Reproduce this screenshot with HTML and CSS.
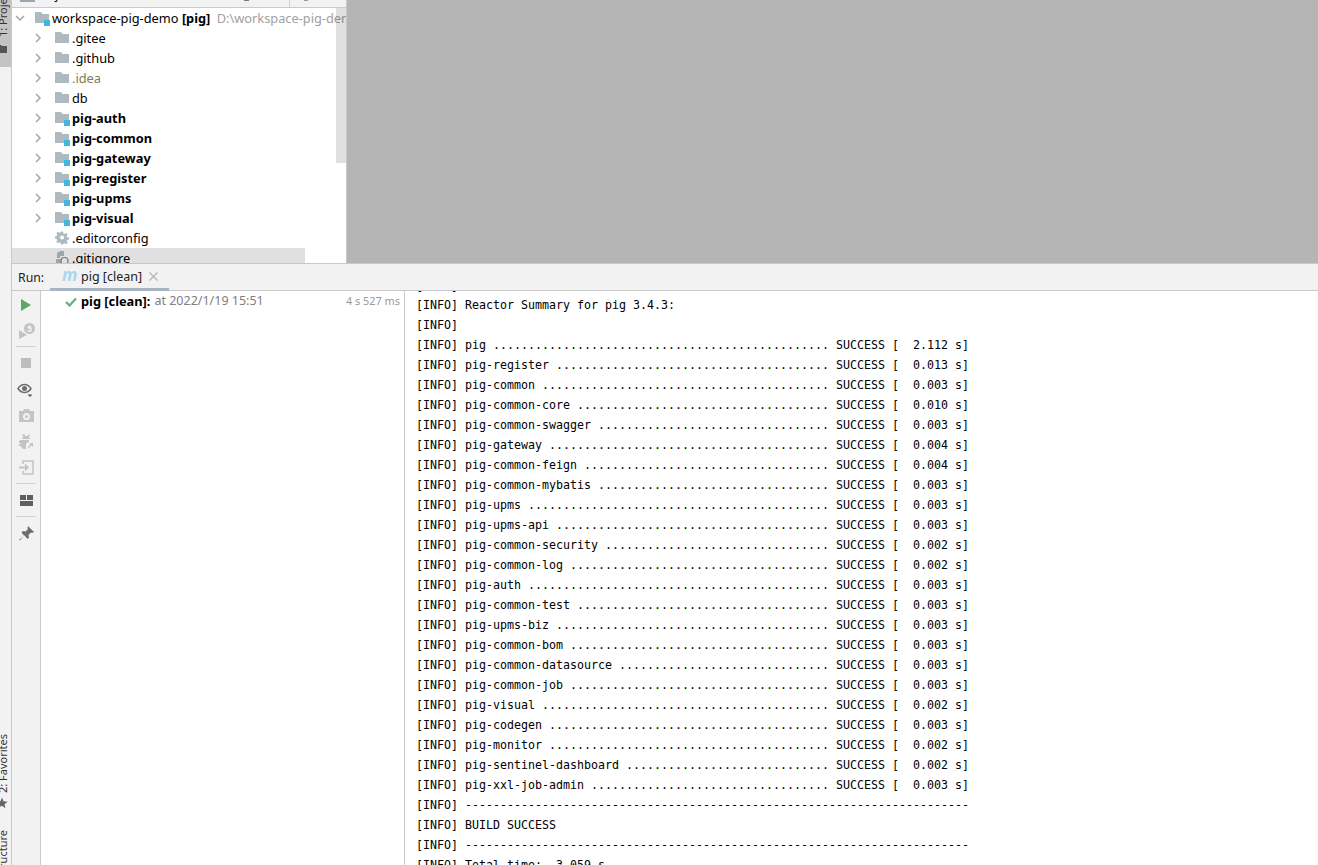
FILE: index.html
```html
<!DOCTYPE html>
<html lang="en">
<head>
<meta charset="utf-8">
<title>pig [clean]</title>
<link rel="stylesheet" href="styles.css">
</head>
<body>
<div class="app">
  <aside class="strip">
    <div class="strip-tab strip-tab-active">
      <span class="vtext">1: Project</span>
      <svg class="strip-icon" width="10" height="10" viewBox="0 0 10 10"><path d="M0 1h4l1 1h5v7H0z" fill="#555"/></svg>
    </div>
    <div class="strip-spacer"></div>
    <div class="strip-tab strip-fav">
      <span class="vtext">2: Favorites</span>
      <svg class="strip-star" width="12" height="12" viewBox="0 0 10 10"><path d="M5 .5l1.300 3.100 3.400.3-2.600 2.200.8 3.300L5 7.200 2.100 8.900l.8-3.300L.3 3.900l3.400-.3z" fill="#666"/></svg>
    </div>
    <div class="strip-tab strip-struct">
      <span class="vtext">Z: Structure</span>
    </div>
  </aside>

  <main class="main">
    <section class="top">
      <div class="project">
        <div class="project-head">
          <i class="head-icon"></i>
          <span class="project-title">Project</span>
          <i class="head-gear"></i>
          <i class="head-sep"></i>
          <i class="head-dot"></i>
        </div>
        <div class="tree">
          <div class="tree-row root">
            <svg class="chev" width="10" height="10" viewBox="0 0 10 10"><path d="M1 3l4 4 4-4" class="chev-line"/></svg>
            <span class="folder module"><svg width="16" height="14" viewBox="0 0 16 14"><path d="M0 1h6l1.500 2H14v9H0z" fill="#aeb9c0"/></svg><i class="badge"></i></span>
            <span class="label">workspace-pig-demo <b>[pig]</b> <span class="path">D:\workspace-pig-demo</span></span>
          </div>
          <div class="tree-row">
            <svg class="chev" width="10" height="10" viewBox="0 0 10 10"><path d="M3 1l4 4-4 4" class="chev-line"/></svg>
            <span class="folder"><svg width="16" height="14" viewBox="0 0 16 14"><path d="M0 1h6l1.500 2H14v9H0z" fill="#aeb9c0"/></svg></span>
            <span class="label">.gitee</span>
          </div>
          <div class="tree-row">
            <svg class="chev" width="10" height="10" viewBox="0 0 10 10"><path d="M3 1l4 4-4 4" class="chev-line"/></svg>
            <span class="folder"><svg width="16" height="14" viewBox="0 0 16 14"><path d="M0 1h6l1.500 2H14v9H0z" fill="#aeb9c0"/></svg></span>
            <span class="label">.github</span>
          </div>
          <div class="tree-row">
            <svg class="chev" width="10" height="10" viewBox="0 0 10 10"><path d="M3 1l4 4-4 4" class="chev-line"/></svg>
            <span class="folder"><svg width="16" height="14" viewBox="0 0 16 14"><path d="M0 1h6l1.500 2H14v9H0z" fill="#aeb9c0"/></svg></span>
            <span class="label ignored">.idea</span>
          </div>
          <div class="tree-row">
            <svg class="chev" width="10" height="10" viewBox="0 0 10 10"><path d="M3 1l4 4-4 4" class="chev-line"/></svg>
            <span class="folder"><svg width="16" height="14" viewBox="0 0 16 14"><path d="M0 1h6l1.500 2H14v9H0z" fill="#aeb9c0"/></svg></span>
            <span class="label">db</span>
          </div>
          <div class="tree-row">
            <svg class="chev" width="10" height="10" viewBox="0 0 10 10"><path d="M3 1l4 4-4 4" class="chev-line"/></svg>
            <span class="folder module"><svg width="16" height="14" viewBox="0 0 16 14"><path d="M0 1h6l1.500 2H14v9H0z" fill="#aeb9c0"/></svg><i class="badge"></i></span>
            <span class="label bold">pig-auth</span>
          </div>
          <div class="tree-row">
            <svg class="chev" width="10" height="10" viewBox="0 0 10 10"><path d="M3 1l4 4-4 4" class="chev-line"/></svg>
            <span class="folder module"><svg width="16" height="14" viewBox="0 0 16 14"><path d="M0 1h6l1.500 2H14v9H0z" fill="#aeb9c0"/></svg><i class="badge"></i></span>
            <span class="label bold">pig-common</span>
          </div>
          <div class="tree-row">
            <svg class="chev" width="10" height="10" viewBox="0 0 10 10"><path d="M3 1l4 4-4 4" class="chev-line"/></svg>
            <span class="folder module"><svg width="16" height="14" viewBox="0 0 16 14"><path d="M0 1h6l1.500 2H14v9H0z" fill="#aeb9c0"/></svg><i class="badge"></i></span>
            <span class="label bold">pig-gateway</span>
          </div>
          <div class="tree-row">
            <svg class="chev" width="10" height="10" viewBox="0 0 10 10"><path d="M3 1l4 4-4 4" class="chev-line"/></svg>
            <span class="folder module"><svg width="16" height="14" viewBox="0 0 16 14"><path d="M0 1h6l1.500 2H14v9H0z" fill="#aeb9c0"/></svg><i class="badge"></i></span>
            <span class="label bold">pig-register</span>
          </div>
          <div class="tree-row">
            <svg class="chev" width="10" height="10" viewBox="0 0 10 10"><path d="M3 1l4 4-4 4" class="chev-line"/></svg>
            <span class="folder module"><svg width="16" height="14" viewBox="0 0 16 14"><path d="M0 1h6l1.500 2H14v9H0z" fill="#aeb9c0"/></svg><i class="badge"></i></span>
            <span class="label bold">pig-upms</span>
          </div>
          <div class="tree-row">
            <svg class="chev" width="10" height="10" viewBox="0 0 10 10"><path d="M3 1l4 4-4 4" class="chev-line"/></svg>
            <span class="folder module"><svg width="16" height="14" viewBox="0 0 16 14"><path d="M0 1h6l1.500 2H14v9H0z" fill="#aeb9c0"/></svg><i class="badge"></i></span>
            <span class="label bold">pig-visual</span>
          </div>
          <div class="tree-row leaf">
            <span class="folder"><svg width="14" height="14" viewBox="0 0 14 14"><path fill="#aeb9c0" fill-rule="evenodd" d="M6 1h2l.4 1.800 1.300.6 1.600-1 1.400 1.400-1 1.600.6 1.300 1.700.3v2l-1.700.4-.6 1.300 1 1.600-1.400 1.400-1.600-1-1.300.6L8 14H6l-.4-1.700-1.300-.6-1.600 1-1.400-1.400 1-1.600-.6-1.300L0 8V6l1.700-.4.600-1.300-1-1.600 1.400-1.400 1.600 1 1.300-.6zM7 5a2 2 0 1 0 0 4 2 2 0 0 0 0-4z" transform="translate(0 -.5)"/></svg></span>
            <span class="label">.editorconfig</span>
          </div>
          <div class="tree-row leaf selected">
            <span class="folder"><svg width="14" height="14" viewBox="0 0 14 14"><path fill="#9aa7b0" d="M2 7V2l3-2h4v5H5v2zM1 8h5v5H1z"/><circle cx="9.500" cy="10" r="3.500" fill="none" stroke="#777" stroke-width="1.200"/></svg></span>
            <span class="label">.gitignore</span>
          </div>
        </div>
        <div class="scroll-thumb"></div>
      </div>
      <div class="editor"></div>
    </section>

    <section class="run">
      <header class="run-head">
        <span class="run-title">Run:</span>
        <div class="run-tab">
          <span class="maven">m</span>
          <span class="run-tab-label">pig [clean]</span>
          <svg class="close" width="9" height="9" viewBox="0 0 9 9"><path d="M.5.500l8 8M8.500.500l-8 8" stroke="#b4b4b4" stroke-width="1.200"/></svg>
        </div>
      </header>
      <div class="run-body">
        <nav class="tools">
          <span class="tool tool-play"><svg width="12" height="12" viewBox="0 0 12 12"><path d="M1 0l10 6-10 6z" fill="#59a869"/></svg></span>
          <span class="tool tool-down"><svg width="16" height="16" viewBox="0 0 16 16"><path d="M0 7l8 5-8 4z" fill="#c4c4c4"/><circle cx="10.500" cy="5.500" r="5.500" fill="#c4c4c4"/><circle cx="10.500" cy="4.200" r="1.700" fill="#f2f2f2"/><path d="M12 5v3H8.500" stroke="#f2f2f2" fill="none" stroke-width="1.300"/></svg></span>
          <hr class="tool-sep">
          <span class="tool"><svg width="12" height="12" viewBox="0 0 12 12"><rect width="10" height="10" x="1" y="1" fill="#bdbdbd"/></svg></span>
          <span class="tool tool-eye"><svg width="18" height="14" viewBox="0 0 18 14"><path d="M1 5.500C3 2.500 5 1.500 7.500 1.500S12 2.500 14 5.500C12 8.500 10 9.500 7.500 9.500S3 8.500 1 5.500z" fill="none" stroke="#6e6e6e" stroke-width="1.500"/><circle cx="7.500" cy="5.500" r="2.500" fill="#6e6e6e"/><path d="M10.500 11.500h5l-2.500 2.500z" fill="#555"/></svg></span>
          <span class="tool"><svg width="15" height="13" viewBox="0 0 15 13"><path fill="#c4c4c4" fill-rule="evenodd" d="M0 2h4l1-2h5l1 2h4v11H0zM7.500 4a3.500 3.500 0 1 0 0 7 3.500 3.500 0 0 0 0-7zm0 2a1.500 1.500 0 1 1 0 3 1.500 1.500 0 0 1 0-3z"/></svg></span>
          <span class="tool"><svg width="15" height="15" viewBox="0 0 15 15"><path fill="#c4c4c4" d="M5 0l1.500 2h2L10 0l1 1-1.200 1.800L11 5H3l1.200-2.200L3 1zM1 6h9v2H9l-2 2v5H5C3 15 2 13 2 12H0v-2h2V9H0V7h1zM10 9l4 0v4l-1.500-1.500L10 14l-1-1 2.500-2.500z"/></svg></span>
          <span class="tool"><svg width="15" height="15" viewBox="0 0 15 15"><path fill="none" stroke="#c4c4c4" stroke-width="1.500" d="M4 4V1h10v13H4v-3"/><path fill="#c4c4c4" d="M0 6.500h6V3.500l4 4-4 4v-3H0z"/></svg></span>
          <hr class="tool-sep">
          <span class="tool"><svg width="13" height="11" viewBox="0 0 13 11"><path fill="#5f5f5f" d="M0 0h6v5H0zM7 0h6v5H7zM0 6h13v5H0z"/></svg></span>
          <hr class="tool-sep">
          <span class="tool"><svg width="15" height="15" viewBox="0 0 15 15"><path fill="#6e6e6e" d="M9 0l6 6-2 1-1-.500-2.500 2.500.5 2.500-1.500 1.500L5 9l-4 5.500L0 14l5-4.500L2.500 6.500 4 5l2.500.500L9 3 8.500 2z"/></svg></span>
        </nav>
        <div class="run-tree">
          <svg class="check" width="12" height="10" viewBox="0 0 12 10"><path d="M1 5l3.500 3.500L11 1.500" fill="none" stroke="#68b47a" stroke-width="2.400"/></svg>
          <span class="run-name">pig [clean]:</span>
          <span class="run-at">at 2022/1/19 15:51</span>
          <span class="run-time">4 s 527 ms</span>
        </div>
        <div class="console">
<div class="log">[INFO] </div>
<div class="log">[INFO] Reactor Summary for pig 3.4.3:</div>
<div class="log">[INFO] </div>
<div class="log">[INFO] pig ................................................ SUCCESS [  2.112 s]</div>
<div class="log">[INFO] pig-register ....................................... SUCCESS [  0.013 s]</div>
<div class="log">[INFO] pig-common ......................................... SUCCESS [  0.003 s]</div>
<div class="log">[INFO] pig-common-core .................................... SUCCESS [  0.010 s]</div>
<div class="log">[INFO] pig-common-swagger ................................. SUCCESS [  0.003 s]</div>
<div class="log">[INFO] pig-gateway ........................................ SUCCESS [  0.004 s]</div>
<div class="log">[INFO] pig-common-feign ................................... SUCCESS [  0.004 s]</div>
<div class="log">[INFO] pig-common-mybatis ................................. SUCCESS [  0.003 s]</div>
<div class="log">[INFO] pig-upms ........................................... SUCCESS [  0.003 s]</div>
<div class="log">[INFO] pig-upms-api ....................................... SUCCESS [  0.003 s]</div>
<div class="log">[INFO] pig-common-security ................................ SUCCESS [  0.002 s]</div>
<div class="log">[INFO] pig-common-log ..................................... SUCCESS [  0.002 s]</div>
<div class="log">[INFO] pig-auth ........................................... SUCCESS [  0.003 s]</div>
<div class="log">[INFO] pig-common-test .................................... SUCCESS [  0.003 s]</div>
<div class="log">[INFO] pig-upms-biz ....................................... SUCCESS [  0.003 s]</div>
<div class="log">[INFO] pig-common-bom ..................................... SUCCESS [  0.003 s]</div>
<div class="log">[INFO] pig-common-datasource .............................. SUCCESS [  0.003 s]</div>
<div class="log">[INFO] pig-common-job ..................................... SUCCESS [  0.003 s]</div>
<div class="log">[INFO] pig-visual ......................................... SUCCESS [  0.002 s]</div>
<div class="log">[INFO] pig-codegen ........................................ SUCCESS [  0.003 s]</div>
<div class="log">[INFO] pig-monitor ........................................ SUCCESS [  0.002 s]</div>
<div class="log">[INFO] pig-sentinel-dashboard ............................. SUCCESS [  0.002 s]</div>
<div class="log">[INFO] pig-xxl-job-admin .................................. SUCCESS [  0.003 s]</div>
<div class="log">[INFO] ------------------------------------------------------------------------</div>
<div class="log">[INFO] BUILD SUCCESS</div>
<div class="log">[INFO] ------------------------------------------------------------------------</div>
<div class="log">[INFO] Total time:  3.059 s</div>
        </div>
      </div>
    </section>
  </main>
</div>
</body>
</html>
```
FILE: styles.css
```css
* { box-sizing: border-box; }
html, body { margin: 0; padding: 0; height: 100%; overflow: hidden; background: #fff; }
body { font-family: "Noto Sans", "Open Sans", sans-serif; font-size: 12.800px; color: #000; }
.app { display: flex; width: 1318px; height: 865px; overflow: hidden; }

.strip { width: 12px; flex: none; display: flex; flex-direction: column; background: #f2f2f2; border-right: 1px solid #c9c9c9; overflow: hidden; color: #333; }
.strip-tab { display: flex; flex-direction: column; align-items: flex-start; gap: 4px; width: 11px; flex: none; overflow: hidden; }
.strip-tab-active { height: 67px; background: #c4c4c4; }
.strip-spacer { flex: 1; }
.vtext { writing-mode: vertical-rl; transform: rotate(180deg); white-space: nowrap; line-height: 10px; margin-left: -2px; font-size: 11px; flex: none; }
.strip-tab-active .vtext { margin-top: -11px; }
.strip-icon { margin-left: -3px; margin-top: 3px; flex: none; }
.strip-fav { height: 102px; justify-content: flex-end; padding-bottom: 21px; }
.strip-star { margin-left: -4px; flex: none; }
.strip-struct { height: 35px; }

.main { flex: 1; min-width: 0; display: flex; flex-direction: column; }
.top { height: 263px; flex: none; display: flex; overflow: hidden; border-bottom: 1px solid #c9c9c9; box-sizing: content-box; }
.project { width: 335px; flex: none; position: relative; background: #fff; border-right: 1px solid #c9c9c9; overflow: hidden; }
.project-head { height: 8px; background: #f2f2f2; border-bottom: 1px solid #c9c9c9; overflow: hidden; display: flex; align-items: flex-start; padding-left: 8px; }
.head-icon { width: 15px; height: 2px; background: #9aa7b0; flex: none; }
.project-title { font-size: 12px; line-height: 16px; height: 16px; margin: -13px 0 0 1px; flex: none; }
.head-gear { width: 5px; height: 1px; background: #777; margin-left: 169px; flex: none; }
.head-sep { width: 1px; height: 7px; background: #d1d1d1; margin-left: 40px; flex: none; }
.head-dot { width: 4px; height: 1px; background: #999; margin-left: 14px; flex: none; }
.tree { display: flex; flex-direction: column; }
.tree-row { height: 20px; flex: none; display: flex; align-items: center; white-space: nowrap; padding-left: 21px; width: 335px; }
.tree-row.root { padding-left: 3px; }
.tree-row.leaf { padding-left: 43px; }
.tree-row.selected { background: linear-gradient(to right, #e0e0e0 293px, transparent 293px); }
.chev { flex: none; margin-right: 12px; }
.root .chev { margin-right: 10px; }
.chev-line { fill: none; stroke: #a6a6a6; stroke-width: 1.500; }
.folder { position: relative; display: inline-flex; width: 17px; height: 14px; flex: none; }
.leaf .folder svg { display: block; }
.badge { position: absolute; right: 2px; bottom: -1px; width: 6px; height: 6px; background: #40b6e0; }
.label { color: #000; line-height: 20px; }
.label b { font-weight: 700; }
.label.bold { font-weight: 700; }
.label.ignored { color: #7d7c5b; }
.path { color: #a0a0a0; margin-left: 3px; }
.scroll-thumb { position: absolute; right: 0; top: 8px; width: 10px; height: 155px; background: rgba(0, 0, 0, .12); }
.editor { flex: 1; background: #b5b5b5; }

.run { flex: 1; min-height: 0; display: flex; flex-direction: column; }
.run-head { height: 27px; flex: none; display: flex; align-items: stretch; background: #f2f2f2; border-bottom: 1px solid #c9c9c9; }
.run-title { width: 38px; padding-left: 6px; line-height: 27px; color: #222; font-size: 12.300px; }
.run-tab { width: 119px; display: flex; align-items: center; border-bottom: 3px solid #a9b4c2; height: 27px; padding-left: 12px; }
.maven { color: #a9d7f0; font-weight: 700; font-style: italic; font-size: 17px; line-height: 1; width: 19px; margin-top: -4px; }
.run-tab-label { color: #222; font-size: 12.500px; }
.close { margin-left: 7px; }

.run-body { flex: 1; min-height: 0; display: flex; }
.tools { width: 29px; flex: none; background: #f2f2f2; border-right: 1px solid #c9c9c9; display: flex; flex-direction: column; align-items: center; }
.tool { height: 26px; width: 100%; display: flex; align-items: center; justify-content: center; flex: none; }
.tool svg { flex: none; display: block; }
.tool-play { padding-top: 2px; }
.tool-down { padding-top: 2px; padding-left: 1px; }
.tool-eye { padding-top: 2px; }
.tool-sep { width: 20px; height: 1px; border: 0; margin: 3px 0; background: #d1d1d1; flex: none; }
.run-tree { width: 364px; flex: none; border-right: 1px solid #c9c9c9; display: flex; align-items: flex-start; padding-left: 24px; line-height: 20px; height: 100%; }
.check { margin-top: 6px; flex: none; }
.run-name { font-weight: 700; margin-left: 4px; }
.run-at { color: #808080; margin-left: 4px; font-size: 12.500px; }
.run-time { color: #999; font-size: 10.900px; margin-left: auto; margin-right: 4px; }
.console { flex: 1; min-width: 0; overflow: hidden; padding-left: 11px; }
.log { height: 20px; margin: 0; line-height: 20px; white-space: pre; font-family: "DejaVu Sans Mono", monospace; font-size: 11.630px; color: #000; }
.log:first-child { margin-top: -16px; line-height: 22px; }
```
